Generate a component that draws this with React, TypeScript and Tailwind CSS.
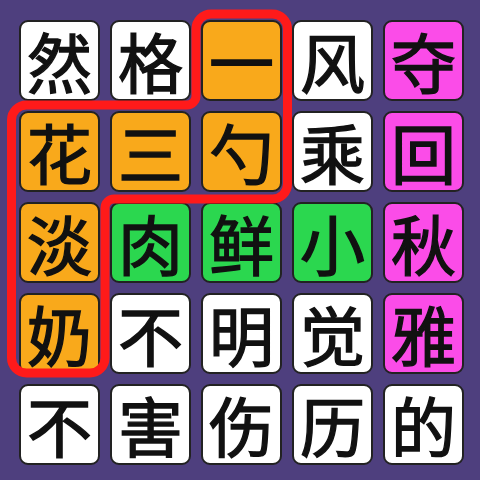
import React from "react";

type Tile = { ch: string; color: string };

const W = "bg-white";
const O = "bg-[#f9a91b]";
const P = "bg-[#fb4ce8]";
const G = "bg-[#2bd74f]";

const tiles: Tile[] = [
  { ch: "然", color: W },
  { ch: "格", color: W },
  { ch: "一", color: O },
  { ch: "风", color: W },
  { ch: "夺", color: P },
  { ch: "花", color: O },
  { ch: "三", color: O },
  { ch: "勺", color: O },
  { ch: "乘", color: W },
  { ch: "回", color: P },
  { ch: "淡", color: O },
  { ch: "肉", color: G },
  { ch: "鲜", color: G },
  { ch: "小", color: G },
  { ch: "秋", color: P },
  { ch: "奶", color: O },
  { ch: "不", color: W },
  { ch: "明", color: W },
  { ch: "觉", color: W },
  { ch: "雅", color: P },
  { ch: "不", color: W },
  { ch: "害", color: W },
  { ch: "伤", color: W },
  { ch: "历", color: W },
  { ch: "的", color: W },
];

// outline around the selected word, drawn over the grid
const outline =
  "M 211 14 L 272.5 14 A 15 15 0 0 1 287.5 29 L 287.5 184 A 15 15 0 0 1 272.5 199 " +
  "L 114 199 A 9 9 0 0 0 105 208 L 105 358 A 15 15 0 0 1 90 373 L 26.5 373 " +
  "A 15 15 0 0 1 11.5 358 L 11.5 120 A 15 15 0 0 1 26.5 105 L 187 105 " +
  "A 9 9 0 0 0 196 96 L 196 29 A 15 15 0 0 1 211 14 Z";

const App = () => {
  return (
    <div
      className="relative w-[480px] h-[480px] bg-[#4e3f7e] pl-[19px] pt-[20px]"
      style={{ fontFamily: '"Noto Sans CJK SC", "Noto Sans", sans-serif' }}
    >
      <div className="grid grid-cols-[repeat(5,81px)] grid-rows-[repeat(5,81px)] gap-[10px]">
        {tiles.map((t, i) => (
          <div
            key={i}
            className={`${t.color} flex items-center justify-center rounded-[9px] border-2 border-[#222222] text-[65px] leading-none text-[#111111] [-webkit-text-stroke:1.4px_#111111]`}
          >
            {t.ch}
          </div>
        ))}
      </div>
      <svg
        className="absolute inset-0 pointer-events-none"
        width="480"
        height="480"
        viewBox="0 0 480 480"
      >
        <path d={outline} fill="none" stroke="#ff1a1a" strokeWidth="9" />
      </svg>
    </div>
  );
};

export default App;
